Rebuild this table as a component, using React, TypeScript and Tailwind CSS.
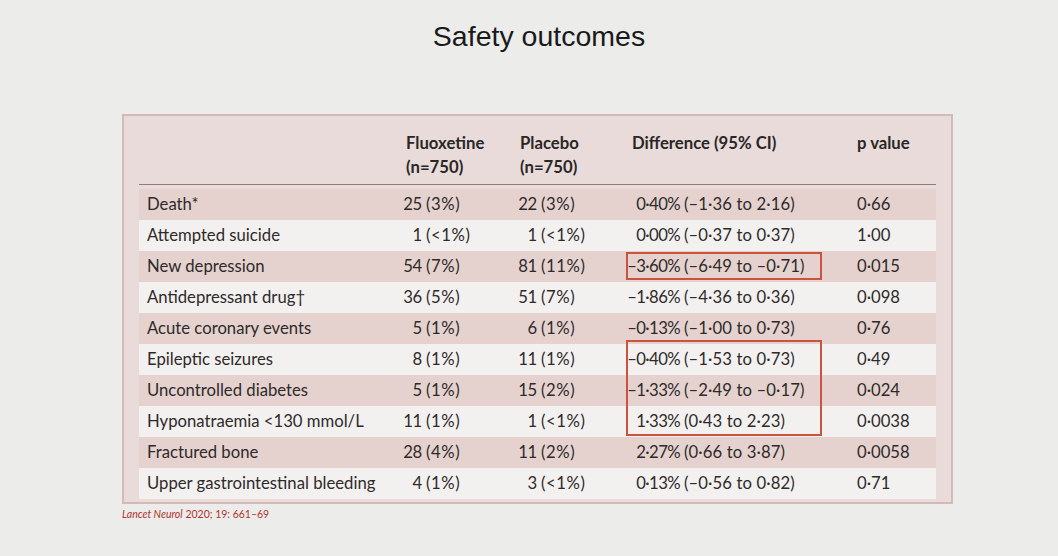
type Row = {
  label: string;
  fn: string;
  fp: string;
  pn: string;
  pp: string;
  d: string;
  ci: string;
  p: string;
};

const rows: Row[] = [
  { label: "Death*", fn: "25", fp: "(3%)", pn: "22", pp: "(3%)", d: "0·40%", ci: "(–1·36 to 2·16)", p: "0·66" },
  { label: "Attempted suicide", fn: "1", fp: "(<1%)", pn: "1", pp: "(<1%)", d: "0·00%", ci: "(–0·37 to 0·37)", p: "1·00" },
  { label: "New depression", fn: "54", fp: "(7%)", pn: "81", pp: "(11%)", d: "–3·60%", ci: "(–6·49 to –0·71)", p: "0·015" },
  { label: "Antidepressant drug†", fn: "36", fp: "(5%)", pn: "51", pp: "(7%)", d: "–1·86%", ci: "(–4·36 to 0·36)", p: "0·098" },
  { label: "Acute coronary events", fn: "5", fp: "(1%)", pn: "6", pp: "(1%)", d: "–0·13%", ci: "(–1·00 to 0·73)", p: "0·76" },
  { label: "Epileptic seizures", fn: "8", fp: "(1%)", pn: "11", pp: "(1%)", d: "–0·40%", ci: "(–1·53 to 0·73)", p: "0·49" },
  { label: "Uncontrolled diabetes", fn: "5", fp: "(1%)", pn: "15", pp: "(2%)", d: "–1·33%", ci: "(–2·49 to –0·17)", p: "0·024" },
  { label: "Hyponatraemia <130 mmol/L", fn: "11", fp: "(1%)", pn: "1", pp: "(<1%)", d: "1·33%", ci: "(0·43 to 2·23)", p: "0·0038" },
  { label: "Fractured bone", fn: "28", fp: "(4%)", pn: "11", pp: "(2%)", d: "2·27%", ci: "(0·66 to 3·87)", p: "0·0058" },
  { label: "Upper gastrointestinal bleeding", fn: "4", fp: "(1%)", pn: "3", pp: "(<1%)", d: "0·13%", ci: "(–0·56 to 0·82)", p: "0·71" },
];

const cols = "grid grid-cols-[267px_114px_106px_225px_1fr]";

export default function App() {
  return (
    <div className="min-h-[556px] w-[1058px] bg-[#ececeb] font-['Lato','Open_Sans',sans-serif] text-[#2e2a2a]">
      <h1 className="pt-[18px] pl-[20px] text-center font-['Liberation_Sans',Arial,sans-serif] text-[28.5px] leading-[36px] text-[#1a1a1a]">
        Safety outcomes
      </h1>

      <div className="ml-[122px] mt-[60px] w-[831px] border-2 border-[#d3bab7] bg-[#e8dbd9] px-[15px] pb-[3px] pt-[15px]">
        <div className={`${cols} border-b-[1.5px] border-[#8c7d7b] pb-[5px] text-[16.7px] font-bold leading-[24px] text-[#2a2626]`}>
          <div />
          <div>
            Fluoxetine
            <br />
            (n=750)
          </div>
          <div>
            Placebo
            <br />
            (n=750)
          </div>
          <div className="pl-[6px]">Difference (95% CI)</div>
          <div className="pl-[6px]">p value</div>
        </div>

        <div className="pt-[4px]">
          {rows.map((r, i) => (
            <div
              key={r.label}
              className={`${cols} h-[31px] whitespace-nowrap text-[16.7px] ${
                i % 2 === 0 ? "bg-[#e5d2cf]" : "bg-[#f3f1f0]"
              }`}
            >
              <div className="flex items-center pl-[8px]">{r.label}</div>
              <div className="flex items-center">
                <span className="ml-[-3px] w-[19px] text-right tracking-[-0.3px]">{r.fn}</span>
                <span className="ml-[4px] tracking-[0.6px]">{r.fp}</span>
              </div>
              <div className="flex items-center">
                <span className="ml-[-2px] w-[19px] text-right tracking-[-0.3px]">{r.pn}</span>
                <span className="ml-[4px] tracking-[0.6px]">{r.pp}</span>
              </div>
              <div className="relative flex items-center">
                <span className="w-[54px] text-right tracking-[-0.6px]">{r.d}</span>
                <span className="ml-[4px] tracking-[0.1px]">{r.ci}</span>
                {i === 2 && (
                  <div className="absolute left-0 top-[1px] h-[28px] w-[196px] border-2 border-[#c9533e]" />
                )}
                {i === 5 && (
                  <div className="absolute left-0 top-[-4px] h-[96px] w-[196px] border-2 border-[#c9533e]" />
                )}
              </div>
              <div className="flex items-center pl-[6px]">{r.p}</div>
            </div>
          ))}
        </div>
      </div>

      <p className="ml-[122px] mt-[3px] text-[10.5px] leading-[14px] text-[#b0342b]">
        <i>Lancet Neurol</i> 2020; 19: 661–69
      </p>
    </div>
  );
}
